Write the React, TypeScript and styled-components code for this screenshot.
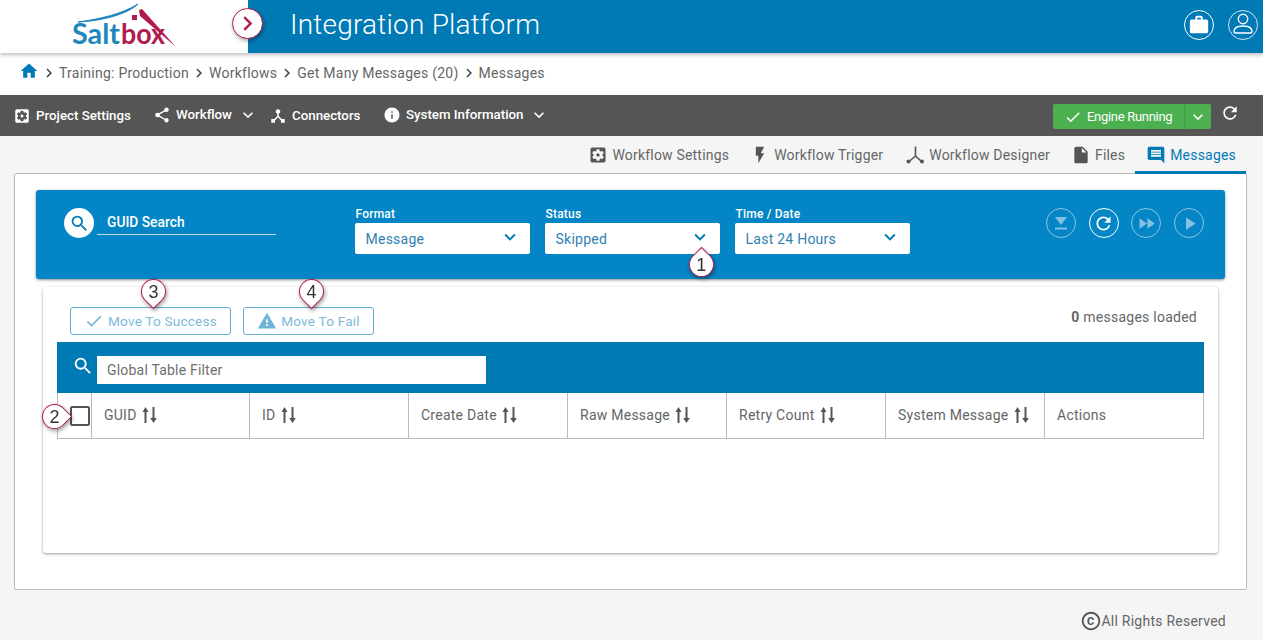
import React from "react";
import styled, { createGlobalStyle } from "styled-components";
import {
  MdHome, MdChevronRight, MdKeyboardArrowDown, MdSettingsApplications, MdShare, MdDeviceHub,
  MdInfo, MdFlashOn, MdInsertDriveFile, MdMessage, MdSearch, MdRefresh, MdWarning,
  MdDone, MdFastForward, MdPlayArrow, MdCopyright, MdWork,
} from "react-icons/md";

const Global = createGlobalStyle`
  html, body { margin: 0; padding: 0; background: #f5f5f5; }
  body { font-family: Roboto, "Liberation Sans", sans-serif; color: #666; overflow: hidden; }
  #root { height: 640px; overflow: hidden; }
  * { box-sizing: border-box; }
`;

const Page = styled.div`display: flex; flex-direction: column; height: 640px;`;

const Header = styled.header`
  height: 53px; display: flex; background: #007ab5; position: relative; z-index: 3;
  box-shadow: 0 2px 4px rgba(0,0,0,.25);
`;
const LogoBox = styled.div`width: 248px; background: #fff; position: relative; flex: none;`;
const LogoSvg = styled.svg`display: block;`;
const Toggle = styled.button`
  position: absolute; left: 232px; top: 8px; width: 31px; height: 31px; border-radius: 50%;
  background: #fff; border: 1px solid #b01c4e; padding: 0; display: flex; align-items: center; justify-content: center;
  color: #b01c4e; font-size: 29px; box-shadow: 1px 2px 4px rgba(0,0,0,.35);
`;
const Title = styled.h1`
  margin: 0 0 0 42px; font-weight: 300; font-size: 28px; line-height: 50px; color: #fff; letter-spacing: .22px; flex: 1;
`;
const HeaderIcons = styled.div`display: flex; gap: 14px; padding: 10px 5px 0 0;`;
const RoundIcon = styled.span<{ $thin?: boolean }>`
  width: 30px; height: 30px; border-radius: 50%; border: ${p => (p.$thin ? "1px solid #cfe6f2" : "1px solid #fff")};
  color: #fff; display: flex; align-items: center; justify-content: center; font-size: 22px;
`;
const UserSvg = styled.svg`margin-top: -2px;`;

const Breadcrumb = styled.nav`
  height: 42px; background: #fff; display: flex; align-items: center; padding: 0 0 3px 19px; font-size: 14px; color: #666;
  letter-spacing: .25px;
`;
const HomeIcon = styled(MdHome)`color: #007ab5; font-size: 20px; margin-top: -3px;`;
const Sep = styled(MdChevronRight)`color: #444; font-size: 18px; margin: 1px 1px 0;`;
const Crumb = styled.span``;

const Toolbar = styled.div`
  height: 41px; background: #555; display: flex; align-items: center; color: #fff; font-size: 13.3px; font-weight: 500;
  padding: 0 23px 0 15px; position: relative;
`;
const ToolItem = styled.span<{ $w: number; $up?: boolean }>`
  width: ${p => p.$w}px; display: flex; align-items: center; white-space: nowrap;
  transform: translateY(${p => (p.$up ? "-1px" : "0")});
  svg:first-child { font-size: 18px; margin: 0 5px 0 -2px; flex: none; }
`;
const ToolChevron = styled(MdKeyboardArrowDown)`font-size: 20px; margin-left: 6px; flex: none;`;
const Spacer = styled.span`flex: 1;`;
const EngineGroup = styled.div`
  display: flex; height: 25px; width: 158px; border-radius: 2px; background: #4caf50; margin-top: 2px; font-size: 13px; font-weight: 400; letter-spacing: -.3px;
`;
const EngineMain = styled.span`
  width: 132px; display: flex; align-items: center; padding-left: 11px; border-right: 1px solid #43a047;
  svg { font-size: 18px; margin-right: 5px; }
`;
const EngineCaret = styled.span`flex: 1; display: flex; align-items: center; justify-content: center; font-size: 20px;`;
const ToolRefresh = styled(MdRefresh)`font-size: 20px; margin: -5px 0 0 9px;`;

const Tabs = styled.div`
  height: 37px; display: flex; justify-content: flex-end; padding-right: 17px; font-size: 14px; letter-spacing: .2px;
  color: #666; background: #f5f5f5;
`;
const Tab = styled.div<{ $active?: boolean }>`
  display: flex; align-items: center; padding: 3px 10px 0 11px;
  color: ${p => (p.$active ? "#007ab5" : "#666")};
  border-bottom: 3px solid ${p => (p.$active ? "#007ab5" : "transparent")};
  height: 38px; position: relative; z-index: 1; gap: 4px;
  svg { font-size: 20px; color: ${p => (p.$active ? "#007ab5" : "#555")}; }
`;
const WideTab = styled(Tab)`padding-left: 12px;`;
const MessageIcon = styled(MdMessage)`transform: scaleX(-1);`;

const Panel = styled.main`
  margin: 0 16px 0 14px; height: 417px; border: 1px solid #bbb; border-radius: 2px; background: #fff; padding: 16px 21px;
`;
const SearchPanel = styled.section`
  height: 89px; background: #0486c6; border-radius: 3px; box-shadow: 0 1px 3px rgba(0,0,0,.45); display: flex; padding: 18px 21px 0 28px;
  position: relative;
`;
const GuidWrap = styled.div`display: flex; align-items: flex-start; width: 291px; flex: none;`;
const SearchCircle = styled.span`
  width: 30px; height: 30px; border-radius: 50%; background: #fff; color: #007ab5; font-size: 21px;
  display: flex; align-items: center; justify-content: center; flex: none;
`;
const GuidField = styled.div`
  width: 179px; height: 27px; margin-left: 3px; border-bottom: 1px solid #b9d6e6; color: #fff; font-size: 13.8px; font-weight: 500;
  padding: 6px 0 0 10px;
`;
const Filters = styled.div`display: flex; gap: 15px; margin-top: -1px;`;
const Filter = styled.div`width: 175px;`;
const FilterLabel = styled.label`display: block; font-size: 12px; font-weight: 500; color: #fff; line-height: 14px; margin-left: .5px; margin-bottom: 2px; letter-spacing: .2px;`;
const Select = styled.div`
  height: 31px; background: #fff; border-radius: 2px; color: #2f7fb2; font-size: 14px; letter-spacing: .25px; display: flex; align-items: center;
  justify-content: space-between; padding: 0 9px 0 10.5px; position: relative;
  svg { font-size: 22px; color: #007ab5; margin-top: -3px; }
`;
const Actions = styled.div`display: flex; margin-left: auto; gap: 12.7px;`;
const ActionCircle = styled.span<{ $on?: boolean }>`
  width: 30px; height: 30px; border-radius: 50%; border: 1px solid ${p => (p.$on ? "#fff" : "#8cc4e2")};
  color: ${p => (p.$on ? "#fff" : "#84c1e2")}; display: flex; align-items: center; justify-content: center; font-size: 21px;
  svg { display: block; }
`;

const Card = styled.section`
  margin: 8px 7px 0; height: 266px; background: #fff; border-radius: 3px; box-shadow: 0 1px 3px rgba(0,0,0,.4); padding: 20px 14px 0;
`;
const CardTop = styled.div`display: flex; height: 35px; align-items: flex-start; padding: 0 7px 0 13px;`;
const GhostBtn = styled.button<{ $w: number }>`
  position: relative; height: 28px; width: ${p => p.$w}px; border: 1px solid #62afd6; border-radius: 3px; background: #fff; color: #7cbada;
  font: 400 13.6px Roboto, sans-serif; letter-spacing: .2px; display: flex; align-items: center; justify-content: center; gap: 4px; padding: 0; margin-right: 12px;
  svg { font-size: 20px; color: #6fb3d6; flex: none; }
`;
const Loaded = styled.span`margin-left: auto; font-size: 14px; letter-spacing: .25px; color: #666; margin-top: 2px; b { font-weight: 700; }`;
const FilterBar = styled.div`height: 51px; background: #007ab5; display: flex; align-items: flex-start; padding: 14px 0 0 15px;`;
const FilterIcon = styled(MdSearch)`color: #fff; font-size: 22px; margin: -1px 3px 0 0;`;
const FilterInput = styled.div`width: 389px; height: 28px; background: #fff; color: #6f6f6f; font-size: 14px; letter-spacing: .2px; display: flex; align-items: center; padding: 0 0 1px 10px;`;
const HeaderRow = styled.div`
  height: 46px; display: flex; border-left: 1px solid #bbb; border-bottom: 1px solid #bbb; width: 1147px;
`;
const Check = styled.div`width: 34px; flex: none; border-right: 1px solid #bbb; display: flex; align-items: center; justify-content: flex-end; position: relative;`;
const CheckBox = styled.span`width: 20px; height: 20px; border: 2px solid #555; border-radius: 2px; margin-right: 1px;`;
const Col = styled.div<{ $w: number }>`
  width: ${p => p.$w}px; flex: none; border-right: 1px solid #bbb; display: flex; align-items: center; padding: 0 0 2px 12px; font-size: 14px; letter-spacing: .25px; color: #666; gap: 5.5px;
`;
const SortSvg = styled.svg`display: block; color: #555; flex: none;`;

const Footer = styled.footer`
  flex: 1; display: flex; justify-content: flex-end; align-items: center; padding: 12px 37px 0 0; font-size: 14px; letter-spacing: .25px; color: #666;
  svg { font-size: 22px; color: #555; margin-right: -1px; }
`;

const rot = { down: 45, up: 225, right: -45 } as const;
const Pin = styled.span<{ $x: number; $y: number }>`
  position: absolute; left: ${p => p.$x}px; top: ${p => p.$y}px; width: 25px; height: 25px; z-index: 5; filter: drop-shadow(1px 2px 2px rgba(0,0,0,.4));
`;
const Drop = styled.span<{ $deg: number }>`
  position: absolute; inset: 0; background: #fff; border: 1px solid #b01c4e; border-radius: 50% 50% 0 50%; transform: rotate(${p => p.$deg}deg);
`;
const PinNum = styled.span`position: absolute; inset: 0; padding-top: 1px; display: flex; align-items: center; justify-content: center; font: 400 18px "Liberation Sans", sans-serif; color: #333;`;
const Callout = ({ n, dir, x, y }: { n: number; dir: keyof typeof rot; x: number; y: number }) => (
  <Pin $x={x} $y={y}><Drop $deg={rot[dir]} /><PinNum>{n}</PinNum></Pin>
);

const Logo = () => (
  <LogoSvg width="190" height="53" viewBox="0 0 190 53">
    <path d="M78 22 C100 19 122 14 138 4 C128 14 102 21 78 22Z" fill="#1f87ba" stroke="#1f87ba" strokeWidth="1" />
    <path d="M139 10 L142 9 L176 47 L140 16 Z" fill="#b01c4e" />
    <rect x="132" y="15" width="5" height="5" fill="#b01c4e" />
    <text x="72" y="44" fontFamily="Lato, sans-serif" fontWeight="700" fontSize="28" textLength="48" lengthAdjust="spacingAndGlyphs" fill="#1f87ba">Salt</text>
    <text x="121" y="44" fontFamily="Lato, sans-serif" fontWeight="700" fontSize="28" textLength="44" lengthAdjust="spacingAndGlyphs" fill="#b01c4e">box</text>
  </LogoSvg>
);

const UserIcon = () => (
  <UserSvg width="22" height="22" viewBox="0 0 22 22" fill="none" stroke="#fff" strokeWidth="1.4">
    <circle cx="11" cy="6" r="4.7" />
    <path d="M3.5 20 h15 a1.500 1.500 0 0 0 1.500-1.500 c0-3.500-3.500-5.500-9-5.500 s-9 2-9 5.500 a1.500 1.500 0 0 0 1.500 1.500z" />
  </UserSvg>
);
const Eject = () => (
  <svg width="18" height="18" viewBox="0 0 18 18" fill="currentColor"><path d="M3 3 h12 l-6 8z" /><rect x="3" y="13.500" width="12" height="2" /></svg>
);
const SortIcon = () => (
  <SortSvg width="15" height="16" viewBox="0 0 15 16" fill="currentColor">
    <path d="M0.500 5 L3.500 0 L6.500 5 H4.500 V16 H2.500 V5Z" />
    <path d="M10.500 0 H12.500 V11 H14.800 L11.500 16 L8.200 11 H10.500Z" />
  </SortSvg>
);
const DesignerIcon = () => (
  <svg width="20" height="20" viewBox="0 0 20 20" fill="none" stroke="currentColor" strokeWidth="1.600">
    <path d="M10.500 1.500 V11 L4 16.500 M10.500 11 L16.500 16.500" />
    <circle cx="3.500" cy="16.500" r="2" fill="currentColor" stroke="none" />
    <circle cx="17" cy="16.500" r="2" fill="currentColor" stroke="none" />
  </svg>
);

const cols: [string, number, boolean][] = [
  ["GUID", 158, true], ["ID", 159, true], ["Create Date", 159, true], ["Raw Message", 159, true],
  ["Retry Count", 159, true], ["System Message", 159, true], ["Actions", 159, false],
];

export default function App() {
  return (
    <Page>
      <Global />
      <Header>
        <LogoBox><Logo /></LogoBox>
        <Toggle aria-label="Toggle menu"><MdChevronRight /></Toggle>
        <Title>Integration Platform</Title>
        <HeaderIcons>
          <RoundIcon><MdWork /></RoundIcon>
          <RoundIcon $thin><UserIcon /></RoundIcon>
        </HeaderIcons>
      </Header>
      <Breadcrumb>
        <HomeIcon /><Sep /><Crumb>Training: Production</Crumb><Sep /><Crumb>Workflows</Crumb><Sep />
        <Crumb>Get Many Messages (20)</Crumb><Sep /><Crumb>Messages</Crumb>
      </Breadcrumb>
      <Toolbar>
        <ToolItem $w={140}><MdSettingsApplications />Project Settings</ToolItem>
        <ToolItem $w={116} $up><MdShare />Workflow<ToolChevron /></ToolItem>
        <ToolItem $w={114}><MdDeviceHub />Connectors</ToolItem>
        <ToolItem $w={170} $up><MdInfo />System Information<ToolChevron /></ToolItem>
        <Spacer />
        <EngineGroup>
          <EngineMain><MdDone />Engine Running</EngineMain>
          <EngineCaret><MdKeyboardArrowDown /></EngineCaret>
        </EngineGroup>
        <ToolRefresh />
      </Toolbar>
      <Tabs>
        <Tab><MdSettingsApplications />Workflow Settings</Tab>
        <Tab><MdFlashOn />Workflow Trigger</Tab>
        <WideTab><DesignerIcon />Workflow Designer</WideTab>
        <Tab><MdInsertDriveFile />Files</Tab>
        <Tab $active><MessageIcon />Messages</Tab>
      </Tabs>
      <Panel>
        <SearchPanel>
          <GuidWrap>
            <SearchCircle><MdSearch /></SearchCircle>
            <GuidField>GUID Search</GuidField>
          </GuidWrap>
          <Filters>
            <Filter><FilterLabel>Format</FilterLabel><Select>Message<MdKeyboardArrowDown /></Select></Filter>
            <Filter>
              <FilterLabel>Status</FilterLabel>
              <Select>Skipped<MdKeyboardArrowDown /><Callout n={1} dir="up" x={144} y={29} /></Select>
            </Filter>
            <Filter><FilterLabel>Time / Date</FilterLabel><Select>Last 24 Hours<MdKeyboardArrowDown /></Select></Filter>
          </Filters>
          <Actions>
            <ActionCircle><Eject /></ActionCircle>
            <ActionCircle $on><MdRefresh /></ActionCircle>
            <ActionCircle><MdFastForward /></ActionCircle>
            <ActionCircle><MdPlayArrow /></ActionCircle>
          </Actions>
        </SearchPanel>
        <Card>
          <CardTop>
            <GhostBtn $w={161}><MdDone />Move To Success<Callout n={3} dir="down" x={70} y={-29} /></GhostBtn>
            <GhostBtn $w={131}><MdWarning />Move To Fail<Callout n={4} dir="down" x={55} y={-29} /></GhostBtn>
            <Loaded><b>0</b> messages loaded</Loaded>
          </CardTop>
          <FilterBar><FilterIcon /><FilterInput>Global Table Filter</FilterInput></FilterBar>
          <HeaderRow>
            <Check><CheckBox /><Callout n={2} dir="right" x={-16} y={11} /></Check>
            {cols.map(([label, w, sort]) => (
              <Col key={label} $w={w}>{label}{sort && <SortIcon />}</Col>
            ))}
          </HeaderRow>
        </Card>
      </Panel>
      <Footer><MdCopyright />All Rights Reserved</Footer>
    </Page>
  );
}
